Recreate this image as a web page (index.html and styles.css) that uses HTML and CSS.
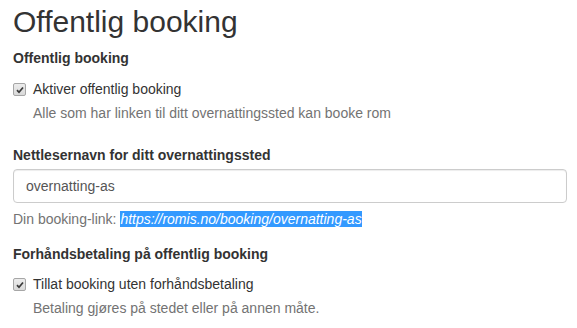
FILE: index.html
```html
<!DOCTYPE html>
<html lang="no">
<head>
<meta charset="utf-8">
<title>Offentlig booking</title>
<link rel="stylesheet" href="styles.css">
</head>
<body>
<div class="page">
  <h1 class="title">Offentlig booking</h1>

  <section class="group group-first">
    <div class="label">Offentlig booking</div>
    <label class="check">
      <span class="box"><svg viewBox="0 0 12 12" width="12" height="12"><path d="M2.4 6.2 L4.8 8.7 L9.6 3.0" fill="none" stroke="#3a3a3a" stroke-width="2.1"/></svg></span>
      <span>Aktiver offentlig booking</span>
    </label>
    <p class="help help-check">Alle som har linken til ditt overnattingssted kan booke rom</p>
  </section>

  <section class="group group-second">
    <div class="label label-input">Nettlesernavn for ditt overnattingssted</div>
    <div class="input">overnatting-as</div>
    <p class="help help-input">Din booking-link: <span class="link">https://romis.no/booking/overnatting-as</span></p>
  </section>

  <section class="group group-third">
    <div class="label">Forhåndsbetaling på offentlig booking</div>
    <label class="check">
      <span class="box"><svg viewBox="0 0 12 12" width="12" height="12"><path d="M2.4 6.2 L4.8 8.7 L9.6 3.0" fill="none" stroke="#3a3a3a" stroke-width="2.1"/></svg></span>
      <span>Tillat booking uten forhåndsbetaling</span>
    </label>
    <p class="help help-check">Betaling gjøres på stedet eller på annen måte.</p>
  </section>
</div>
</body>
</html>
```

FILE: styles.css
```css
html, body {
  margin: 0;
  padding: 0;
  background: #ffffff;
}
body {
  font-family: "Liberation Sans", Arial, Helvetica, sans-serif;
  font-size: 14px;
  line-height: 20px;
  color: #333333;
}
.page {
  padding: 0 10px 0 13px;
}
.title {
  margin: 5px 0 0 0;
  font-size: 30px;
  line-height: 33px;
  font-weight: normal;
  color: #333333;
}
.group {
  display: flex;
  flex-direction: column;
}
.group-first { margin-top: 10px; }
.group-second { margin-top: 22px; }
.group-third { margin-top: 15px; }
.label {
  font-weight: bold;
  line-height: 20px;
}
.label-input {
  margin-bottom: 4px;
}
.check {
  display: flex;
  align-items: flex-start;
  margin-top: 10px;
  line-height: 20px;
}
.group-first .check { margin-top: 11px; }
.box {
  width: 11px;
  height: 11px;
  margin: 4px 7px 0 0;
  border: 1px solid #a6a6a6;
  border-radius: 2px;
  background: linear-gradient(#ececec, #d9d9d9);
  display: flex;
  align-items: center;
  justify-content: center;
  flex: none;
}
.box svg {
  width: 10px;
  height: 10px;
}
.help {
  margin: 4px 0 0 0;
  color: #737373;
  line-height: 20px;
}
.help-check {
  padding-left: 20px;
}
.help-input {
  margin-top: 6px;
}
.input {
  height: 32px;
  border: 1px solid #cccccc;
  border-radius: 4px;
  padding: 0 12px;
  line-height: 32px;
  color: #555555;
  box-shadow: inset 0 1px 1px rgba(0,0,0,0.075);
}
.link {
  font-style: italic;
  background: #3399ff;
  color: #ffffff;
}
```
